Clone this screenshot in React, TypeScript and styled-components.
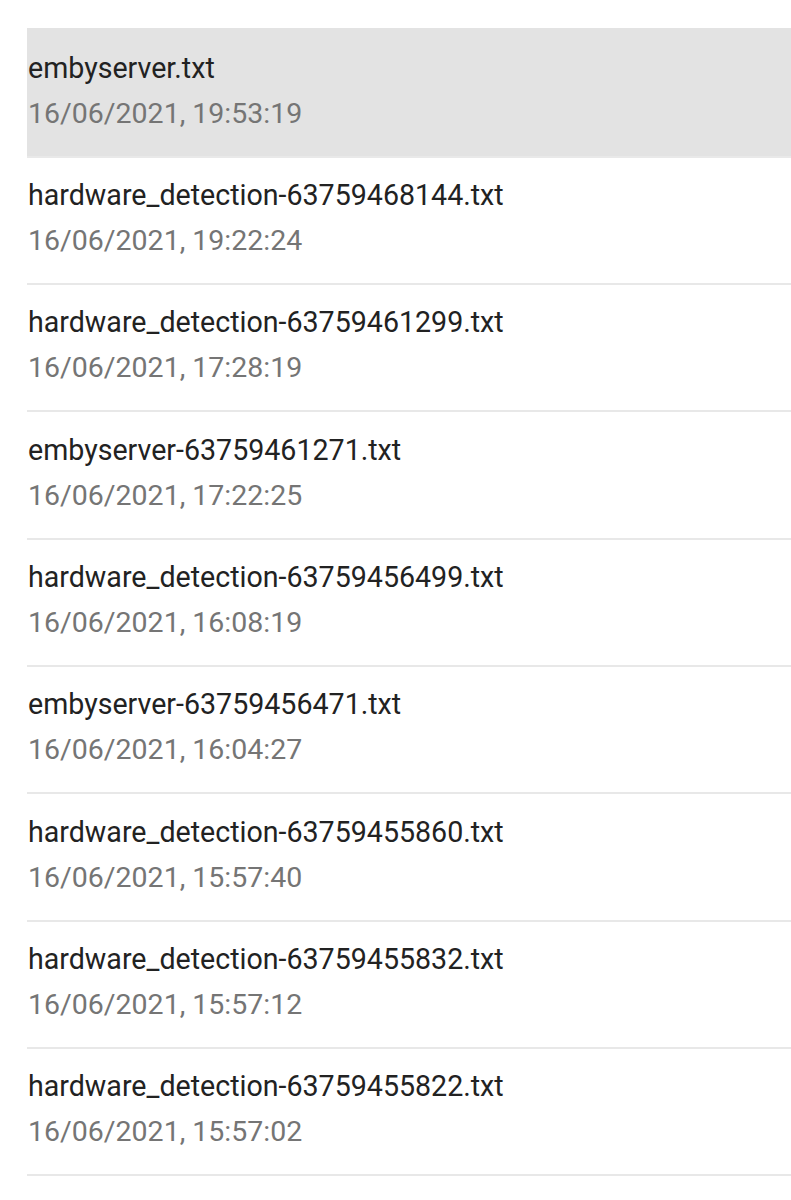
import styled, { createGlobalStyle } from "styled-components";

const GlobalStyle = createGlobalStyle`
  body {
    margin: 0;
    background: #fff;
    font-family: Roboto, "Noto Sans", sans-serif;
  }
`;

const List = styled.div`
  padding: 28px 0 0 27px;
  display: flex;
  flex-direction: column;
`;

const Item = styled.div<{ $active?: boolean }>`
  padding: ${(p) => (p.$active ? "17.8px" : "15.3px")} 0 20px 1px;
  border-bottom: 2px solid ${(p) => (p.$active ? "#e9e9e9" : "#e8e8e8")};
  background: ${(p) => (p.$active ? "#e3e3e3" : "transparent")};
`;

const Name = styled.div`
  font-size: 28.6px;
  line-height: 45px;
  color: #222;
  white-space: nowrap;
`;

const Stamp = styled.div`
  font-size: 28.5px;
  line-height: 45px;
  color: #757575;
  white-space: nowrap;
`;

const logs = [
  ["embyserver.txt", "16/06/2021, 19:53:19"],
  ["hardware_detection-63759468144.txt", "16/06/2021, 19:22:24"],
  ["hardware_detection-63759461299.txt", "16/06/2021, 17:28:19"],
  ["embyserver-63759461271.txt", "16/06/2021, 17:22:25"],
  ["hardware_detection-63759456499.txt", "16/06/2021, 16:08:19"],
  ["embyserver-63759456471.txt", "16/06/2021, 16:04:27"],
  ["hardware_detection-63759455860.txt", "16/06/2021, 15:57:40"],
  ["hardware_detection-63759455832.txt", "16/06/2021, 15:57:12"],
  ["hardware_detection-63759455822.txt", "16/06/2021, 15:57:02"],
];

export default function App() {
  return (
    <>
      <GlobalStyle />
      <List>
        {logs.map(([name, date], i) => (
          <Item key={name} $active={i === 0}>
            <Name>{name}</Name>
            <Stamp>{date}</Stamp>
          </Item>
        ))}
      </List>
    </>
  );
}
